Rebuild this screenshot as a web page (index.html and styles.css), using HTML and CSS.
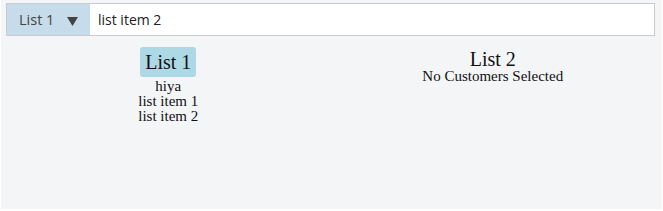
FILE: index.html
```html
<!DOCTYPE html>
<html lang="en">
<head>
    <meta charset="UTF-8">
    <meta name="viewport" content="width=device-width, initial-scale=1.0">
    <title>Lists</title>
    <link rel="stylesheet" href="styles.css">
</head>
<body>
    <div class="app">
        <div class="search-bar">
            <div class="list-select">
                <span>List 1</span>
                <svg class="arrow" width="11" height="9" viewBox="0 0 11 9"><polygon points="0,0 11,0 5.5,9" fill="#444"/></svg>
            </div>
            <input type="text" class="search-input" value="list item 2">
        </div>

        <div class="lists">
            <div class="list">
                <div class="list-title active">List 1</div>
                <div class="list-item">hiya</div>
                <div class="list-item">list item 1</div>
                <div class="list-item">list item 2</div>
            </div>
            <div class="list">
                <div class="list-title">List 2</div>
                <div class="list-item">No Customers Selected</div>
            </div>
        </div>
    </div>
</body>
</html>
```

FILE: styles.css
```css
/* General */
body {
    margin: 0;
    background: #ffffff;
    font-family: "Liberation Serif", "Times New Roman", serif;
}
.app {
    margin: 0 1px 2px 1px;
    height: 209px;
    background: #f4f5f7;
    padding: 3px 7px 0 5px;
    box-sizing: border-box;
}
/* Search bar */
.search-bar {
    display: flex;
    height: 33px;
    box-sizing: border-box;
    border: 1px solid #c8ccd0;
    background: #fff;
}
.list-select {
    width: 83px;
    background: #c7dceb;
    display: flex;
    align-items: center;
    padding-left: 12px;
    box-sizing: border-box;
    font-family: "Open Sans", sans-serif;
    font-size: 14.5px;
    color: #444;
}
.arrow {
    margin-left: 13px;
    margin-top: 3px;
}
.search-input {
    flex: 1;
    border: none;
    outline: none;
    padding: 0 8px;
    font-family: "Open Sans", sans-serif;
    font-size: 14px;
    color: #222;
    background: #fff;
}
/* Lists */
.lists {
    display: grid;
    grid-template-columns: 1fr 1fr;
    margin-top: 11px;
}
.list {
    display: flex;
    flex-direction: column;
    align-items: center;
    color: #111;
}
.list-title {
    font-size: 20px;
    line-height: 20px;
    padding-top: 2px;
}
.list-title.active {
    line-height: 24px;
    padding: 3px 5px;
    border-radius: 3px;
    background: #add8e6;
    margin-bottom: 2px;
}
.list-item {
    font-size: 15px;
    line-height: 15px;
}
```
